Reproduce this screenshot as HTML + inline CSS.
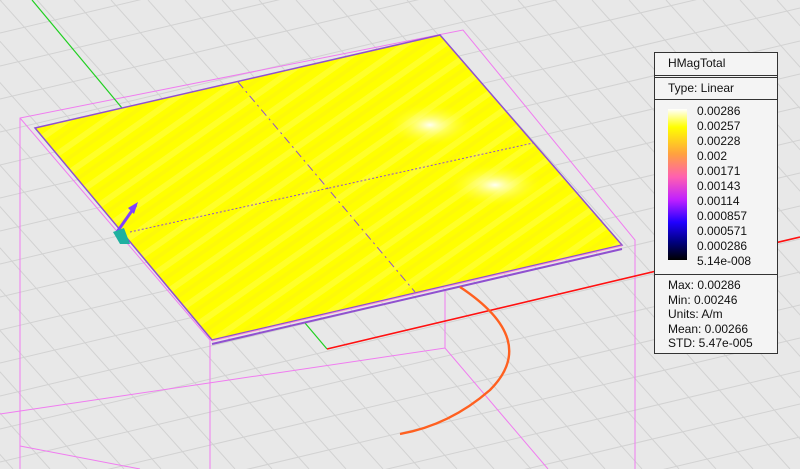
<!DOCTYPE html>
<html><head><style>
html,body{margin:0;width:800px;height:469px;overflow:hidden;background:#e8e8e8;font-family:"Liberation Sans",sans-serif;}
#lg{position:absolute;left:654px;top:52px;width:124px;height:302px;border:1px solid #333;background:#f4f4f4;font-size:12px;color:#111;box-sizing:border-box;}
.r{border-bottom:1px solid #333;}
</style></head><body>
<svg width="800" height="469" style="position:absolute;left:0;top:0">
<defs>
<radialGradient id="b1"><stop offset="0" stop-color="#fffff0"/><stop offset="1" stop-color="#ffff00" stop-opacity="0"/></radialGradient>
<pattern id="wv" width="30" height="22" patternUnits="userSpaceOnUse" patternTransform="rotate(-35)"><rect width="30" height="22" fill="#ffff00"/><rect y="2" width="30" height="6" fill="#ffffa0" opacity=".5"/><rect y="13" width="30" height="4" fill="#f4e030" opacity=".4"/></pattern>
</defs>
<g id="grid" stroke="#d2d2d2" stroke-width="1" fill="none"></g>
<g stroke="#f07cf0" stroke-width="1" fill="none">
<polyline points="20,469 20,118 463,30 635,240 635,469"/>
<line x1="210" y1="340" x2="210" y2="469"/>
<polyline points="0,414 445,348 548,469"/>
<line x1="445" y1="290" x2="445" y2="348"/>
<line x1="20" y1="118" x2="210" y2="340"/>
<line x1="20" y1="446" x2="140" y2="469"/>
</g>
<line x1="32" y1="0" x2="122" y2="108" stroke="#20d020" stroke-width="1.2"/>
<line x1="305" y1="323" x2="327" y2="349" stroke="#20d020" stroke-width="1.2"/>
<line x1="327" y1="349" x2="800" y2="237" stroke="#ff1010" stroke-width="1.6"/>
<polygon points="35,128 440,35 622,245 212,340" fill="url(#wv)"/>
<polygon points="35,128 440,35 622,245 212,340" fill="#ffff00" opacity=".5"/>
<ellipse cx="430" cy="125" rx="45" ry="22" fill="url(#b1)"/>
<ellipse cx="495" cy="185" rx="50" ry="22" fill="url(#b1)"/>
<polygon points="35,128 440,35 622,245 212,340" fill="none" stroke="#9050d0" stroke-width="1.5"/>
<line x1="212" y1="344" x2="622" y2="249" stroke="#9050d0" stroke-width="2"/>
<line x1="212" y1="341" x2="622" y2="246" stroke="#ff9ad0" stroke-width="1"/>
<line x1="238" y1="82" x2="415" y2="292" stroke="#9050d0" stroke-dasharray="8,4,2,4" stroke-width="1"/>
<line x1="130" y1="232" x2="533" y2="143" stroke="#9050d0" stroke-dasharray="2,2" stroke-width="1"/>
<path d="M460,287 Q540,340 490,390 Q450,425 400,434" stroke="#ff6020" stroke-width="2.4" fill="none"/>
<path d="M117,232 L136,205" stroke="#8040ff" stroke-width="3"/>
<polygon points="138,202 128,208 134,214" fill="#8040ff"/>
<polygon points="113,232 124,228 130,244 120,244" fill="#20b0a0"/>
</svg>
<div id="lg">
<div class="r" style="height:22px;line-height:21px;padding-left:13px">HMagTotal</div>
<div style="height:1px"></div>
<div class="r" style="height:21px;line-height:20px;padding-left:13px;border-top:1px solid #333">Type: Linear</div>
<div class="r" style="height:174px;position:relative">
<div style="position:absolute;left:13px;top:9px;width:19px;height:151px;background:linear-gradient(#ffffff 0%,#ffff00 12%,#ffa040 30%,#ff60b0 45%,#c020ff 60%,#2000ff 75%,#000080 88%,#000000 100%)"></div>
<div style="position:absolute;left:42px;top:4px;line-height:15px">0.00286<br>0.00257<br>0.00228<br>0.002<br>0.00171<br>0.00143<br>0.00114<br>0.000857<br>0.000571<br>0.000286<br>5.14e-008</div>
</div>
<div style="padding:3px 0 0 13px;line-height:14.5px">Max: 0.00286<br>Min: 0.00246<br>Units: A/m<br>Mean: 0.00266<br>STD: 5.47e-005</div>
</div>
<script>
var g=document.getElementById('grid'),s='';
for(var i=-20;i<40;i++){var x=i*37;s+='<line x1="'+x+'" y1="0" x2="'+(x+420)+'" y2="469"/>';}
for(var j=-10;j<40;j++){var y=j*33;s+='<line x1="0" y1="'+y+'" x2="800" y2="'+(y-190)+'"/>';}
g.innerHTML=s;
</script>
</body></html>
